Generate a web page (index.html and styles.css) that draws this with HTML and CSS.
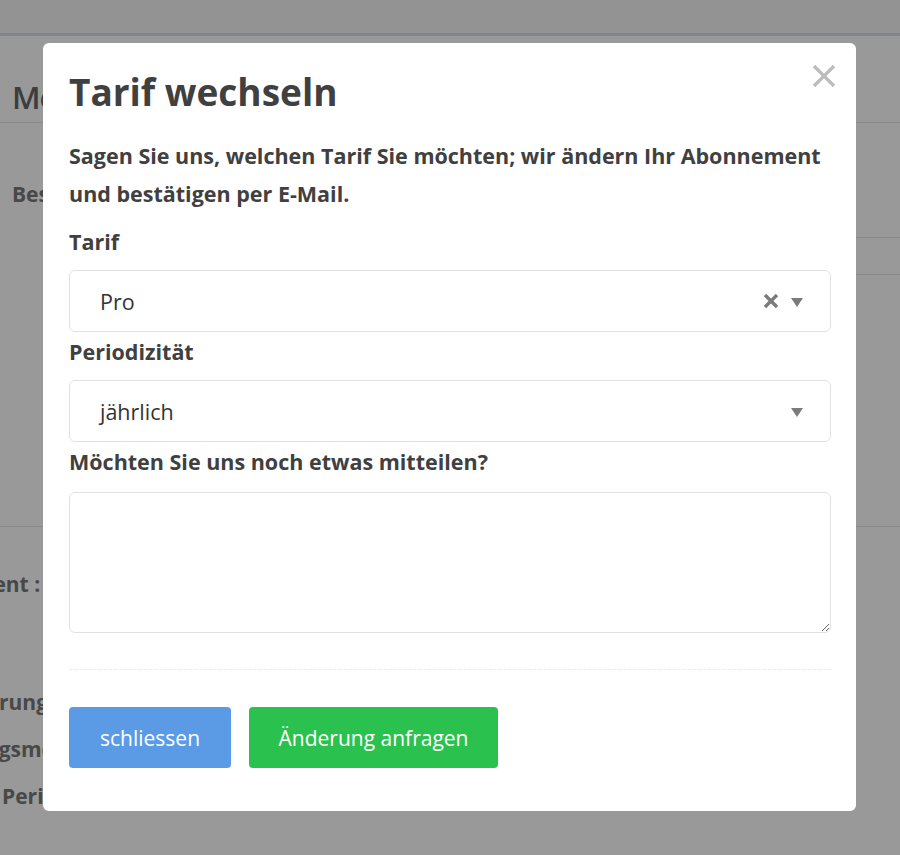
FILE: index.html
```html
<!DOCTYPE html>
<html lang="de">
  <head>
    <meta charset="UTF-8" />
    <meta name="viewport" content="width=device-width, initial-scale=1.0" />
    <title>Tarif wechseln</title>
    <link rel="stylesheet" href="styles.css">
  </head>
  <body>
    <div class="page">
      <div class="topbar"></div>
      <h1 class="page-title">Mein Abonnement</h1>
      <div class="section">
        <p class="section-label">Bestellungen</p>
        <div class="table">
          <div class="table-head"></div>
          <div class="table-body"></div>
        </div>
      </div>
      <div class="details">
        <p class="detail detail-sub">Abonnement :</p>
        <p class="detail detail-change">Änderung</p>
        <p class="detail detail-pay">Zahlungsmethode</p>
        <p class="detail detail-period">Periodizität</p>
      </div>
    </div>

    <div class="overlay"></div>

    <div class="modal">
      <button class="modal-close" aria-label="schliessen">
        <svg width="24" height="24" viewBox="0 0 24 24">
          <path d="M2 2 L22 22 M22 2 L2 22" stroke="#bcbcbc" stroke-width="3.2" fill="none" />
        </svg>
      </button>
      <h2 class="modal-title">Tarif wechseln</h2>
      <p class="modal-intro">Sagen Sie uns, welchen Tarif Sie möchten; wir ändern Ihr Abonnement und bestätigen per E-Mail.</p>

      <label class="field-label">Tarif</label>
      <div class="select">
        <span class="select-value">Pro</span>
        <span class="select-clear">
          <svg width="16" height="16" viewBox="0 0 16 16">
            <path d="M2 2 L14 14 M14 2 L2 14" stroke="#7b7b7b" stroke-width="3.4" fill="none" />
          </svg>
        </span>
        <span class="select-arrow"></span>
      </div>

      <label class="field-label">Periodizität</label>
      <div class="select">
        <span class="select-value">jährlich</span>
        <span class="select-arrow"></span>
      </div>

      <label class="field-label">Möchten Sie uns noch etwas mitteilen?</label>
      <textarea class="message"></textarea>

      <div class="modal-footer">
        <button class="btn btn-blue">schliessen</button>
        <button class="btn btn-green">Änderung anfragen</button>
      </div>
    </div>
  </body>
</html>
```

FILE: styles.css
```css
body {
  margin: 0;
  font-family: "Open Sans", "Liberation Sans", sans-serif;
  color: #444;
  background: #fff;
  overflow: hidden;
}
.page {
  height: 855px;
}
.topbar {
  height: 33px;
  background: #f5f5f5;
  border-bottom: 3px solid #d2dfe8;
}
.page-title {
  margin: 0;
  padding: 36px 12px 0;
  height: 50px;
  font-size: 31px;
  font-weight: 600;
  color: #666;
  border-bottom: 1px solid #e6e6e6;
  line-height: 50px;
  box-sizing: content-box;
  letter-spacing: -1px;
}
.section {
  padding: 0 0 0 12px;
}
.section-label {
  margin: 0;
  padding-top: 56px;
  font-size: 21px;
  font-weight: 700;
  color: #787878;
  line-height: 30px;
}
.table {
  margin-left: 400px;
}
.table-head {
  margin-top: 28px;
  height: 36px;
  border-top: 1px solid #e6e6e6;
  border-bottom: 1px solid #e6e6e6;
}
.table-body {
  height: 251px;
}
.details {
  padding-top: 42px;
  border-top: 1px solid #e6e6e6;
}
.detail {
  margin: 0;
  font-size: 21px;
  font-weight: 700;
  color: #787878;
  line-height: 30px;
  white-space: nowrap;
}
.detail-sub {
  margin-left: -108px;
  margin-bottom: 88px;
}
.detail-change {
  margin-left: -55px;
  margin-bottom: 17px;
}
.detail-pay {
  margin-left: -74px;
  margin-bottom: 17px;
}
.detail-period {
  margin-left: 2px;
}

.overlay {
  position: fixed;
  inset: 0;
  background: rgba(0, 0, 0, 0.4);
}

.modal {
  position: absolute;
  top: 43px;
  left: 43px;
  width: 813px;
  height: 768px;
  box-sizing: border-box;
  padding: 24px 25px 0 26px;
  background: #fff;
  border-radius: 6px;
}
.modal-close {
  position: absolute;
  right: 20px;
  top: 21px;
  padding: 0;
  border: 0;
  background: none;
  line-height: 0;
}
.modal-title {
  margin: 0;
  font-size: 37px;
  font-weight: 700;
  line-height: 50px;
  color: #404040;
}
.modal-intro {
  margin: 20px 0 14px;
  font-size: 21.5px;
  font-weight: 700;
  line-height: 38px;
  color: #404040;
}
.field-label {
  display: block;
  margin: 5px 0 13px;
  font-size: 21.5px;
  font-weight: 700;
  line-height: 30px;
  color: #404040;
}
.select {
  display: flex;
  align-items: center;
  height: 62px;
  box-sizing: border-box;
  padding: 0 27px 0 30px;
  border: 1px solid #dfe3e6;
  border-radius: 6px;
}
.select-value {
  flex: 1;
  font-size: 21.5px;
  color: #333;
}
.select-clear {
  line-height: 0;
  margin-right: 12px;
}
.select-arrow {
  width: 0;
  height: 0;
  border-left: 6px solid transparent;
  border-right: 6px solid transparent;
  border-top: 9px solid #7b7b7b;
  margin-top: 3px;
}
.message {
  display: block;
  width: 100%;
  height: 141px;
  box-sizing: border-box;
  margin-top: 15px;
  border: 1px solid #dfe3e6;
  border-radius: 6px;
  font-family: inherit;
  font-size: 21px;
}
.modal-footer {
  margin-top: 36px;
  padding-top: 37px;
  border-top: 1px dashed #e8ebee;
  display: flex;
  gap: 18px;
}
.btn {
  height: 61px;
  border: 0;
  border-radius: 4px;
  color: #fff;
  font-family: inherit;
  font-size: 21px;
  cursor: pointer;
}
.btn-blue {
  width: 162px;
  background: #5b9be6;
}
.btn-green {
  width: 249px;
  background: #2bc14f;
}
```
